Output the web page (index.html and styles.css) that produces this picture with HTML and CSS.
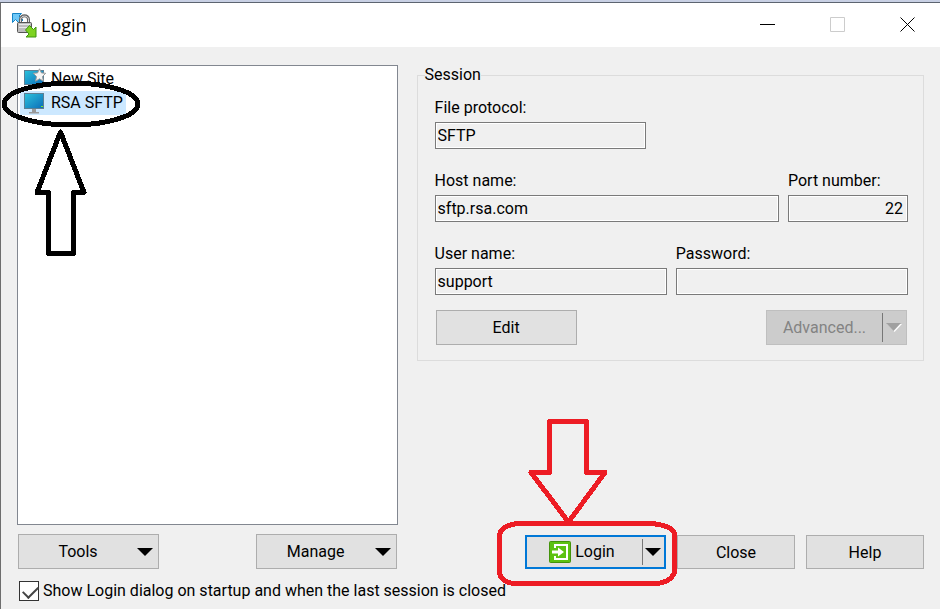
FILE: index.html
```
<!DOCTYPE html>
<html lang="en">

<head>
    <meta charset="utf-8">
    <meta name="viewport" content="width=device-width, initial-scale=1">
    <title>Login</title>
    <link rel="stylesheet" href="styles.css">
</head>

<body>

    <div class="backdrop"></div>

    <div class="window">
        <header class="titlebar">
            <svg class="app-icon" width="25" height="25" viewBox="0 0 25 25">
                <path d="M.5.5H9.500L7 3l4 4-3.500 3.500-4-4L.5 9.500z" fill="#6fc8f7" stroke="#1583c5" />
                <path d="M8.500 10V6.500C8.500 1.500 16.500 1.500 16.500 6.500V10" fill="none" stroke="#666" stroke-width="3" />
                <path d="M8.500 10V6.500C8.500 2 16.500 2 16.500 6.500V10" fill="none" stroke="#ddd" />
                <rect x="5.500" y="9.500" width="14" height="10" rx="1" fill="#bdbdbd" stroke="#555" />
                <path d="M7 11.500h11M7 14.500h10" stroke="#e8e8e8" />
                <path d="M17.500 12.500l4 4 2.500-2.500v10H14l3-3-3.500-4z" fill="#7ed321" stroke="#3f9410" />
            </svg>
            <h1 class="title">Login</h1>
            <button class="win-btn" type="button" aria-label="Minimize">
                <svg width="16" height="16"><path d="M0 7.500h15" stroke="#000" /></svg>
            </button>
            <button class="win-btn" type="button" aria-label="Maximize" disabled>
                <svg width="16" height="16"><path d="M.5.5h14v14H.5z" fill="none" stroke="#ccc" /></svg>
            </button>
            <button class="win-btn" type="button" aria-label="Close window">
                <svg width="16" height="16"><path d="M.5.5l14 14M14.500.5l-14 14" stroke="#000" /></svg>
            </button>
        </header>

        <form class="content">
            <div class="columns">
                <section class="sites">
                    <div class="site-list">
                        <ul>
                            <li>
                                <a class="site" href="#new">
                                    <svg width="22" height="22" viewBox="0 0 22 22">
                                        <rect x=".5" y="2.500" width="19" height="14" fill="url(#screen)" stroke="#5b7f94" />
                                        <path d="M7 17h6v3h3v1H4v-1h3z" fill="#888" />
                                        <path d="M15.500.8l1.900 4.100 4.300.4-3.200 3.200.9 4.700-3.900-2.400-3.900 2.400.9-4.700L9.300 5.300l4.300-.4z" fill="#f4f4f4" stroke="#999" />
                                    </svg>
                                    <span>New Site</span>
                                </a>
                            </li>
                            <li>
                                <a class="site selected" href="#rsa">
                                    <svg width="22" height="22" viewBox="0 0 22 22">
                                        <defs>
                                            <linearGradient id="screen" x1="0" y1="0" x2="1" y2="1">
                                                <stop offset="0" stop-color="#2cc3dc" />
                                                <stop offset="1" stop-color="#0b6cb8" />
                                            </linearGradient>
                                        </defs>
                                        <rect x=".5" y="1.500" width="19" height="15" fill="url(#screen)" stroke="#5b7f94" />
                                        <path d="M17 14.500h2" stroke="#7dea2a" />
                                        <path d="M8 17h4v3h3v1.500H5V20h3z" fill="#999" />
                                    </svg>
                                    <span>RSA SFTP</span>
                                </a>
                            </li>
                        </ul>
                        <!-- points at the saved site -->
                        <svg class="mark mark-site" width="150" height="180" viewBox="0 0 150 180" shape-rendering="crispEdges">
                            <ellipse cx="71" cy="24" rx="67" ry="21" />
                            <path d="M60.500 52L84 112.500H73.500v61H48.500v-61H37z" />
                        </svg>
                    </div>
                    <div class="row spread site-buttons">
                        <button class="btn menu-btn" type="button"><span>Tools</span><i class="arrow"></i></button>
                        <button class="btn menu-btn" type="button"><span>Manage</span><i class="arrow"></i></button>
                    </div>
                </section>

                <section class="details">
                    <fieldset class="session">
                        <legend>Session</legend>
                        <div class="fields">
                            <div class="field protocol">
                                <label for="protocol">File protocol:</label>
                                <input id="protocol" type="text" value="SFTP" readonly>
                            </div>
                            <div class="row">
                                <div class="field grow">
                                    <label for="host">Host name:</label>
                                    <input id="host" type="text" value="sftp.rsa.com" readonly>
                                </div>
                                <div class="field port">
                                    <label for="port">Port number:</label>
                                    <input id="port" type="text" value="22" readonly>
                                </div>
                            </div>
                            <div class="row">
                                <div class="field grow">
                                    <label for="user">User name:</label>
                                    <input id="user" type="text" value="support" readonly>
                                </div>
                                <div class="field grow">
                                    <label for="password">Password:</label>
                                    <input id="password" type="password" readonly>
                                </div>
                            </div>
                        </div>
                        <div class="row spread session-buttons">
                            <button class="btn" type="button">Edit</button>
                            <div class="split disabled">
                                <button class="split-main" type="button" disabled>Advanced...</button>
                                <button class="split-drop" type="button" aria-label="Advanced options" disabled>
                                    <svg width="16" height="10" viewBox="0 0 16 10">
                                        <path d="M1 1h15L8.500 9z" fill="#fff" />
                                        <path d="M0 0h15L7.500 8z" fill="#a0a0a0" />
                                    </svg>
                                </button>
                            </div>
                        </div>
                    </fieldset>

                    <div class="actions">
                        <div class="split default">
                            <button class="split-main" type="submit">
                                <svg width="22" height="22" viewBox="0 0 22 22">
                                    <rect x=".5" y=".5" width="21" height="21" rx="1" fill="#5cc211" stroke="#43930b" />
                                    <path d="M6 7V4h12v14H6v-3" fill="none" stroke="#fff" stroke-width="2" />
                                    <path d="M3 11h8" stroke="#fff" stroke-width="3" />
                                    <path d="M9 6.500L15 11l-6 4.500z" fill="#fff" />
                                </svg>
                                Login
                            </button>
                            <button class="split-drop" type="button" aria-label="Login options"><i class="arrow"></i></button>
                            <!-- points at the login button -->
                            <svg class="mark mark-login" width="185" height="175" viewBox="0 0 185 175" shape-rendering="crispEdges">
                                <path d="M54.500 6.500h37v51H110L73.500 107 36 57.500h18.500z" />
                                <path d="M24 108.500H154C168 109 179.500 113 179.500 120V155C179.500 163 170 168.500 160 168.500H21C11 168.500 4.500 163 4.500 157V121C4.500 113 14 109 24 108.500z" />
                            </svg>
                        </div>
                        <button class="btn small" type="button">Close</button>
                        <button class="btn small" type="button">Help</button>
                    </div>
                </section>
            </div>

            <label class="startup">
                <input type="checkbox" checked>
                <span>Show Login dialog on startup and when the last session is closed</span>
            </label>
        </form>
    </div>

</body>

</html>
```
FILE: styles.css
```
* {
    box-sizing: border-box;
}

body {
    display: flex;
    flex-direction: column;
    min-height: 100vh;
    margin: 0;
    background: #f0f0f0;
    color: #000;
    font: 16px/20px Roboto, "Noto Sans", sans-serif;
}

button, input {
    font: inherit;
    color: inherit;
}

ul {
    list-style-type: none;
    margin: 0;
    padding: 0;
}

/* strip of the window behind */
.backdrop {
    height: 2px;
    background: #c8d0e4;
}

.window {
    display: flex;
    flex-direction: column;
    flex: 1;
    border-top: 1px solid #5c6470;
    border-left: 1px solid #6e6e6e;
}

/* title bar */
.titlebar {
    display: flex;
    align-items: center;
    height: 44px;
    padding: 0 24px 0 11px;
    background: #fff;
}

.title {
    flex: 1;
    margin: 0 0 0 4px;
    font: 18px/24px "Open Sans", sans-serif;
}

.win-btn {
    display: flex;
    padding: 0;
    margin-left: 54px;
    border: 0;
    background: none;
}

.content {
    display: flex;
    flex-direction: column;
    flex: 1;
    padding: 18px 16px 8px;
}

.columns {
    display: grid;
    grid-template-columns: 3fr 4fr;
    gap: 19px;
    flex: 1;
}

.sites, .details {
    display: flex;
    flex-direction: column;
}

.row {
    display: flex;
    gap: 9px;
}

.spread {
    justify-content: space-between;
}

.grow {
    flex: 1;
}

/* site list */
.site-list {
    position: relative;
    flex: 1;
    margin-bottom: 9px;
    padding: 1px 2px;
    border: 1px solid #828790;
    background: #fff;
}

.site {
    display: inline-flex;
    align-items: center;
    gap: 5px;
    height: 24px;
    padding: 0 3px 0 4px;
    color: #000;
    line-height: 22px;
    text-decoration: none;
    vertical-align: top;
}

.site-list li {
    height: 24px;
}

.selected {
    background: #cce8ff;
}

.site-buttons {
    padding: 0 1px;
}

/* buttons */
.btn {
    width: 141px;
    height: 35px;
    padding: 1px 0 0;
    border: 1px solid #adadad;
    background: #e1e1e1;
}

.small {
    width: 118px;
    height: 34px;
}

.menu-btn {
    display: flex;
    align-items: center;
    padding-right: 5px;
}

.menu-btn span {
    flex: 1;
}

.arrow {
    border: 8px solid transparent;
    border-top-color: #000;
    border-bottom: 0;
}

.split {
    position: relative;
    display: flex;
    width: 141px;
    height: 35px;
    border: 1px solid #adadad;
    background: #e1e1e1;
}

.split button {
    display: flex;
    align-items: center;
    justify-content: center;
    padding: 0;
    border: 0;
    background: none;
}

.split .split-main {
    flex: 1;
    gap: 4px;
}

.split .split-drop {
    width: 24px;
    margin: 2px 0;
    border-left: 1px solid #777;
}

.disabled {
    border-color: #bfbfbf;
    background: #ccc;
    color: #838383;
}

.default {
    height: 34px;
    border: 2px solid #0078d7;
}

.default .split-main {
    padding-right: 5px;
}

.default .split-drop {
    width: 22px;
}

/* session box */
.session {
    min-width: 0;
    margin: 0;
    padding: 0 7px 15px;
    border: 1px solid #dcdcdc;
}

.session legend {
    padding: 0;
}

.fields {
    display: flex;
    flex-direction: column;
    gap: 21px;
    padding: 12px 8px 15px 10px;
}

.field {
    display: flex;
    flex-direction: column;
    gap: 3px;
}

.field label {
    line-height: 22px;
}

.field input {
    width: 100%;
    height: 27px;
    padding: 0 2px;
    border: 1px solid #7a7a7a;
    background: #f0f0f0;
    box-shadow: inset 0 0 0 1px #fff;
}

.protocol {
    width: 211px;
}

.port {
    width: 120px;
}

.port input {
    padding-right: 4px;
    text-align: right;
}

.session-buttons {
    padding: 0 9px 0 11px;
}

.actions {
    display: flex;
    justify-content: flex-end;
    gap: 11px;
    margin-top: auto;
}

/* check box */
.startup {
    display: flex;
    align-items: center;
    align-self: flex-start;
    gap: 4px;
    margin: 12px 0 0 2px;
}

.startup input {
    appearance: none;
    width: 20px;
    height: 20px;
    margin: 0;
    border: 1px solid #333;
    background: #fff;
}

.startup input:checked::before {
    content: "";
    display: block;
    width: 13px;
    height: 7px;
    margin: 4px 0 0 3px;
    border-left: 2px solid #444;
    border-bottom: 2px solid #444;
    transform: rotate(-45deg);
}

/* hand-drawn marks */
.mark {
    position: absolute;
    z-index: 1;
    fill: none;
    stroke: #000;
    stroke-width: 5px;
    stroke-linejoin: round;
    pointer-events: none;
}

.mark-site {
    top: 14px;
    left: -18px;
}

.mark-login {
    top: -122px;
    left: -32px;
    stroke: #ed1c24;
}
```
